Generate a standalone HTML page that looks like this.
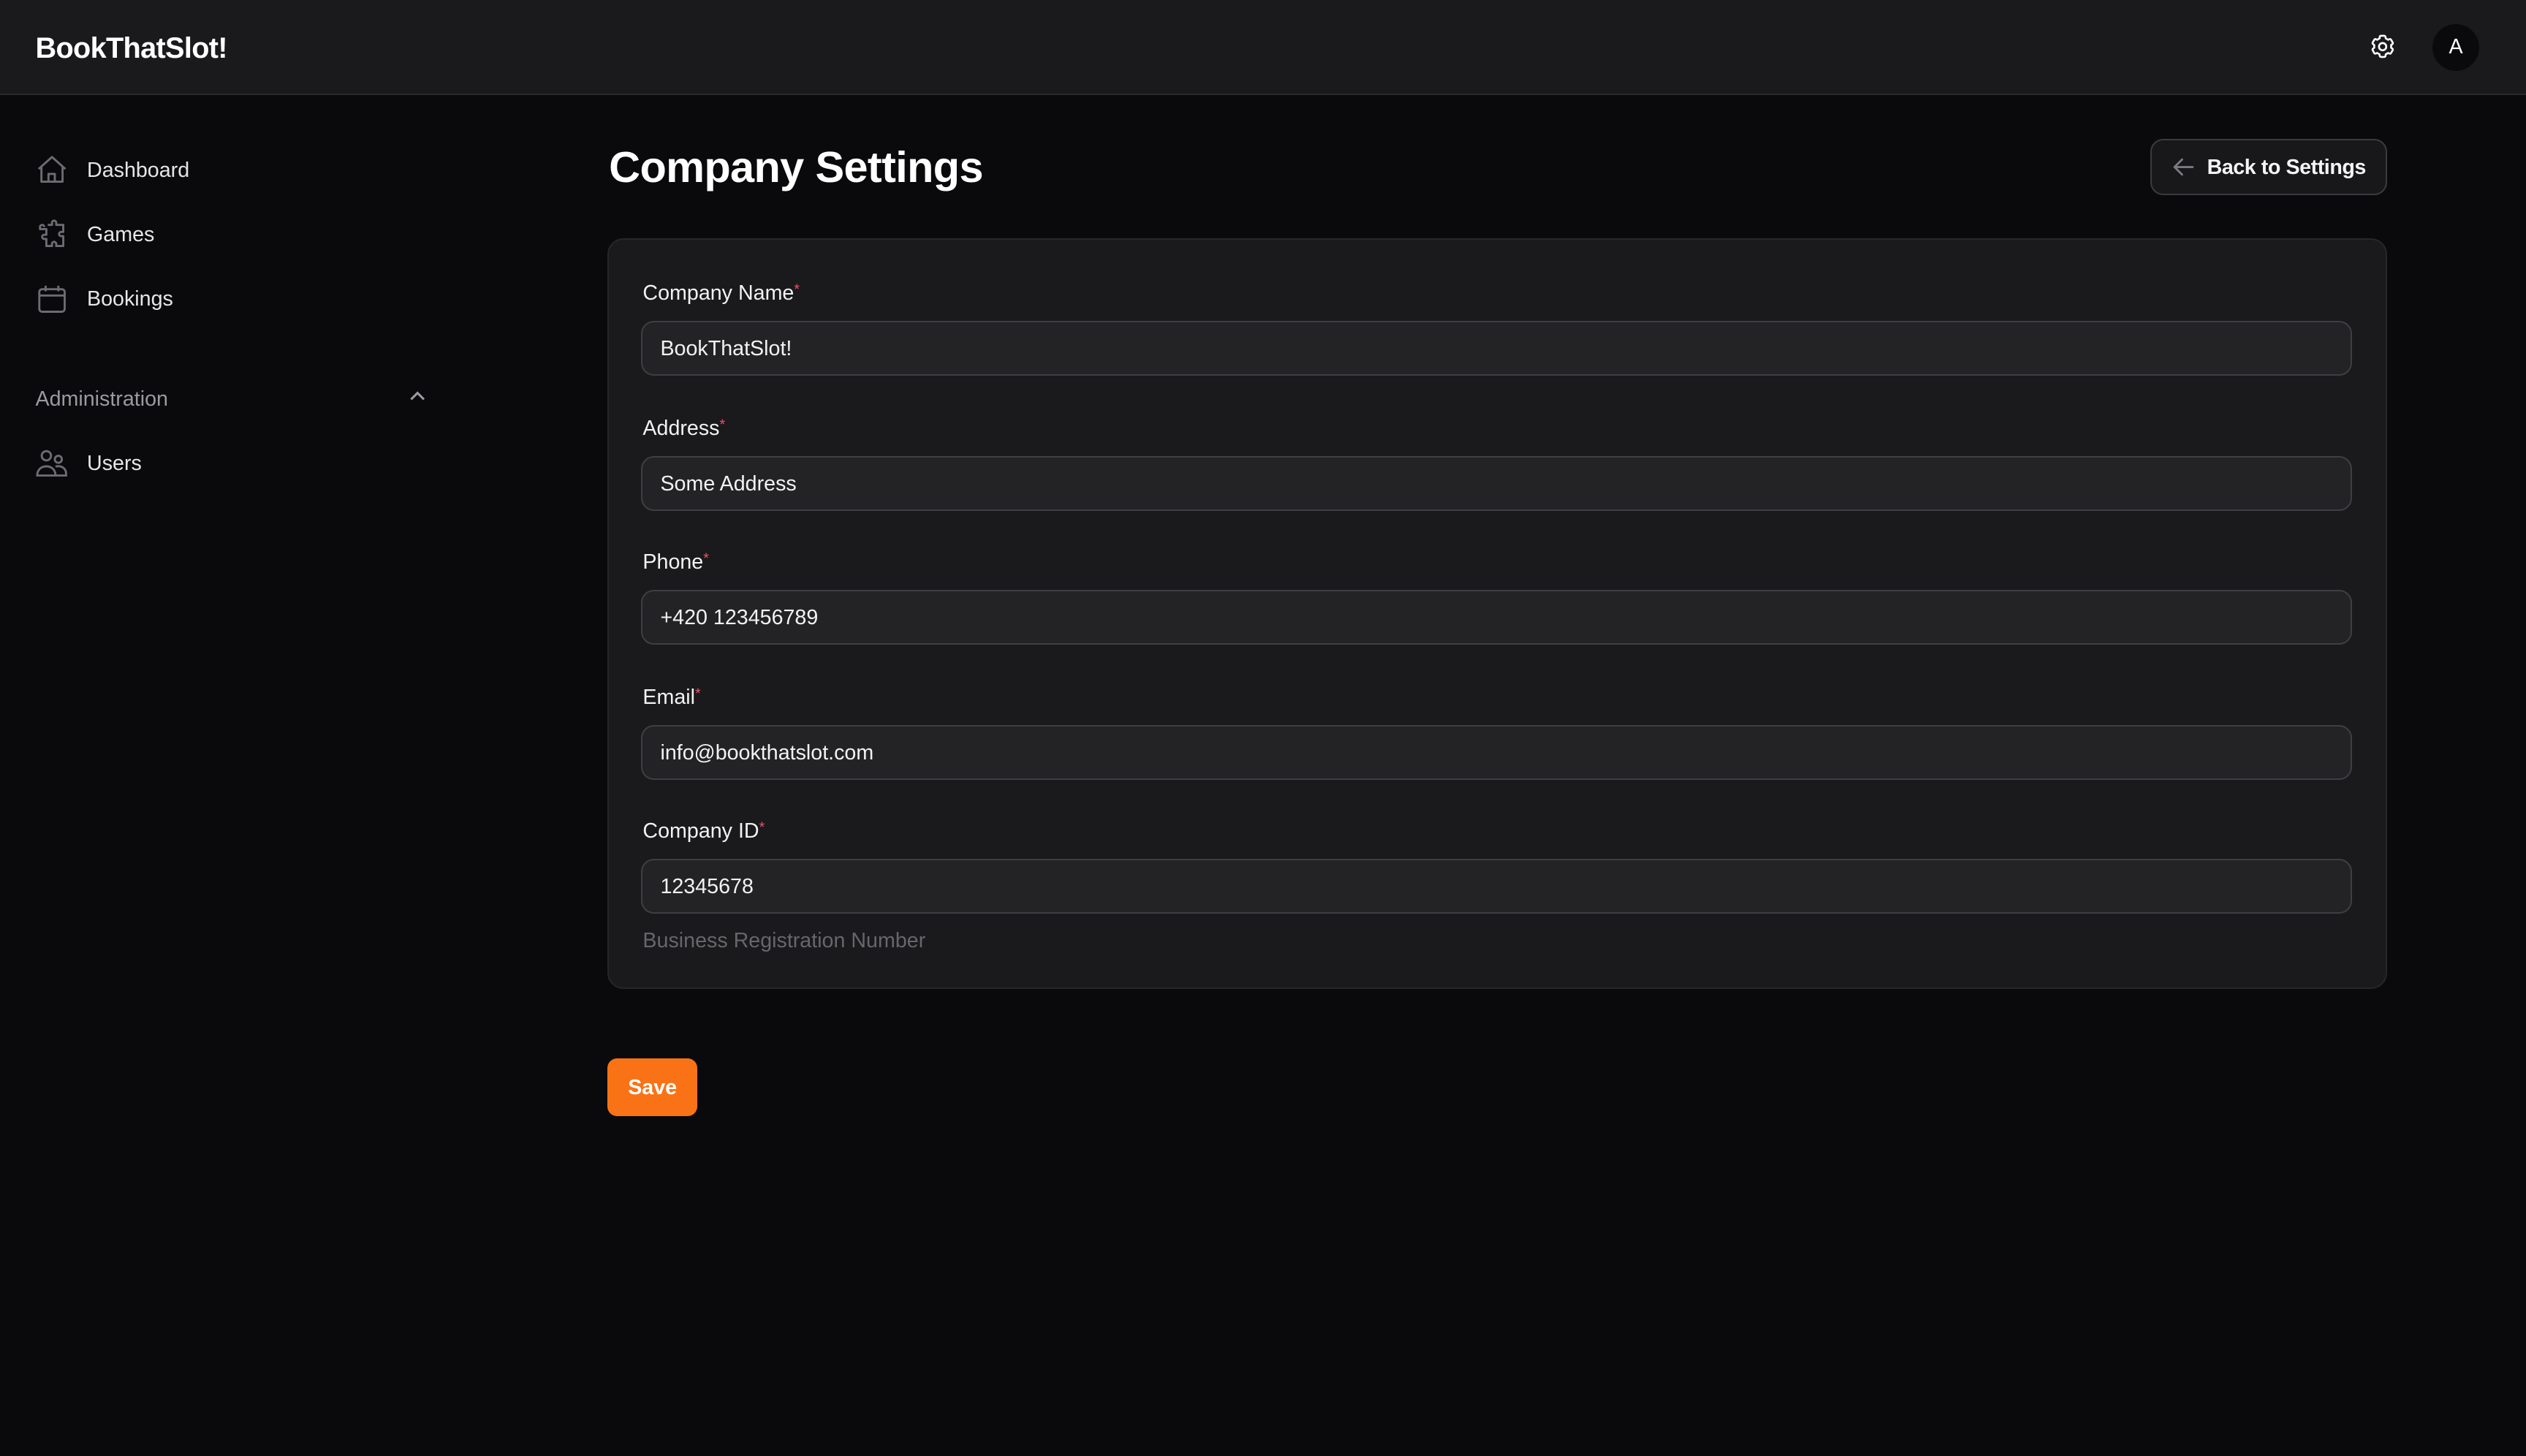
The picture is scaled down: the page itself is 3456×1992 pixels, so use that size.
<!DOCTYPE html>
<html><head><meta charset="utf-8"><style>
html,body{margin:0;padding:0;background:#0a0a0c;overflow:hidden}
body{width:1568px;height:904px;zoom:2.204082;position:relative;font-family:"Liberation Sans",sans-serif;color:#f2f2f3}
.a{position:absolute;white-space:nowrap}
.hdr{left:0;top:0;width:1568px;height:58px;background:#1a1a1c;border-bottom:1px solid #2a2a2d}
.nav{font-size:13px;color:#e6e6e8;line-height:16px}
.lbl{left:399px;font-size:13px;line-height:16px;color:#f2f2f3}
.lbl sup{color:#f0506e;font-size:9px;position:relative;top:-2px;vertical-align:top}
.inp{left:398px;width:1062px;height:34px;background:#232326;border:1px solid #3f3f43;border-radius:8px;box-sizing:border-box;font-size:13px;line-height:33px;padding-left:11px;color:#f2f2f3}
</style></head><body>
<div class="a hdr"></div>
<div class="a" style="left:22px;top:19px;font-size:18px;font-weight:bold;line-height:22px;color:#fff;letter-spacing:-0.3px">BookThatSlot!</div>
<svg class="a" style="left:1470px;top:20px" width="18" height="18" viewBox="0 0 24 24" fill="none" stroke="#fff" stroke-width="1.6" stroke-linecap="round" stroke-linejoin="round"><path d="M9.6 3.9c.1-.5.5-.9 1.1-.9h2.6c.5 0 1 .4 1.1.9l.2 1.3c.7.3 1.3.7 1.9 1.1l1.2-.5c.5-.2 1.1 0 1.3.5l1.3 2.2c.3.5.1 1-.3 1.4l-1 .8c.1.7.1 1.4 0 2.1l1 .8c.4.3.6.9.3 1.4l-1.3 2.2c-.3.5-.8.7-1.3.5l-1.2-.5c-.6.5-1.2.8-1.9 1.1l-.2 1.3c-.1.5-.5.9-1.1.9h-2.6c-.5 0-1-.4-1.1-.9l-.2-1.3c-.7-.3-1.3-.7-1.900-1.1l-1.2.5c-.5.2-1.1 0-1.3-.5L3.8 15c-.3-.5-.1-1 .3-1.4l1-.8c-.1-.7-.1-1.4 0-2.1l-1-.8c-.4-.3-.6-.9-.3-1.4l1.3-2.2c.3-.5.8-.7 1.3-.5l1.2.5c.6-.5 1.2-.8 1.9-1.1z"/><circle cx="12" cy="12" r="3"/></svg>
<div class="a" style="left:1510px;top:15px;width:29px;height:29px;border-radius:50%;background:#0a0a0c;text-align:center;line-height:29px;font-size:13px;color:#fff">A</div>

<svg class="a" style="left:22px;top:95px" width="21" height="21" viewBox="0 0 24 24" fill="none" stroke="#6c6c72" stroke-width="1.5" stroke-linejoin="round"><path d="M2.5 11.5L12 3l9.5 8.5M4.5 9.8V20.5h15V9.8M9.5 20.5v-5.5h4.5v5.5"/></svg>
<div class="a nav" style="left:54px;top:98px">Dashboard</div>
<svg class="a" style="left:22px;top:135px" width="21" height="21" viewBox="0 0 24 24" fill="none" stroke="#6c6c72" stroke-width="1.5" stroke-linejoin="round"><path d="M9 5h3V3.5a1.5 1.5 0 013 0V5h5v5h-1.5a1.5 1.5 0 000 3H20v7h-5v-1.5a1.5 1.5 0 00-3 0V20H8v-5H6.5a1.5 1.5 0 010-3H8v-4H3.5v-1.5a1.5 1.5 0 013 0"/></svg>
<div class="a nav" style="left:54px;top:138px">Games</div>
<svg class="a" style="left:22px;top:175px" width="21" height="21" viewBox="0 0 24 24" fill="none" stroke="#6c6c72" stroke-width="1.5"><rect x="3" y="5" width="18" height="16" rx="2"/><path d="M3 9.5h18M7.5 2.5v4M16.5 2.5v4"/></svg>
<div class="a nav" style="left:54px;top:178px">Bookings</div>
<div class="a" style="left:22px;top:240px;font-size:13px;line-height:16px;color:#9a9aa0">Administration</div>
<svg class="a" style="left:253px;top:241px" width="12" height="10" viewBox="0 0 12 10" fill="none" stroke="#9a9aa0" stroke-width="1.4"><path d="M2 7l4-4 4 4"/></svg>
<svg class="a" style="left:22px;top:277px" width="21" height="21" viewBox="0 0 24 24" fill="none" stroke="#6c6c72" stroke-width="1.5"><circle cx="8" cy="6.5" r="3.3"/><circle cx="16.5" cy="9" r="2.5"/><path d="M1.5 20.5c0-4 2.8-6.5 6.5-6.5s6.5 2.5 6.5 6.5zM14.5 14.2c.6-.2 1.3-.3 2-.3 3 0 5.5 2 5.5 5.3v1.3h-7"/></svg>
<div class="a nav" style="left:54px;top:280px">Users</div>

<div class="a" style="left:378px;top:87px;font-size:27px;font-weight:bold;line-height:34px;color:#fff;letter-spacing:-0.3px">Company Settings</div>
<div class="a" style="left:1335px;top:86px;width:147px;height:35px;box-sizing:border-box;background:#18181a;border:1px solid #3b3b3f;border-radius:8px"></div>
<svg class="a" style="left:1348px;top:96px" width="15" height="15" viewBox="0 0 16 16" fill="none" stroke="#7a7a80" stroke-width="1.4" stroke-linecap="round" stroke-linejoin="round"><path d="M14 8H2.5M7 3L2 8l5 5"/></svg>
<div class="a" style="left:1370px;top:96px;font-size:13px;font-weight:bold;line-height:16px;color:#f4f4f5;letter-spacing:-0.2px">Back to Settings</div>

<div class="a" style="left:377px;top:148px;width:1105px;height:466px;box-sizing:border-box;background:#1a1a1c;border:1px solid #27272a;border-radius:10px"></div>
<div class="a lbl" style="top:174px">Company Name<sup>*</sup></div>
<div class="a inp" style="top:199px">BookThatSlot!</div>
<div class="a lbl" style="top:258px">Address<sup>*</sup></div>
<div class="a inp" style="top:283px">Some Address</div>
<div class="a lbl" style="top:341px">Phone<sup>*</sup></div>
<div class="a inp" style="top:366px">+420 123456789</div>
<div class="a lbl" style="top:425px">Email<sup>*</sup></div>
<div class="a inp" style="top:450px">info@bookthatslot.com</div>
<div class="a lbl" style="top:508px">Company ID<sup>*</sup></div>
<div class="a inp" style="top:533px">12345678</div>
<div class="a" style="left:399px;top:576px;font-size:13px;line-height:16px;color:#66666c">Business Registration Number</div>

<div class="a" style="left:377px;top:657px;width:56px;height:36px;background:#f97316;border-radius:6px;text-align:center;line-height:37px;font-size:13px;font-weight:bold;color:#fff">Save</div>
</body></html>
